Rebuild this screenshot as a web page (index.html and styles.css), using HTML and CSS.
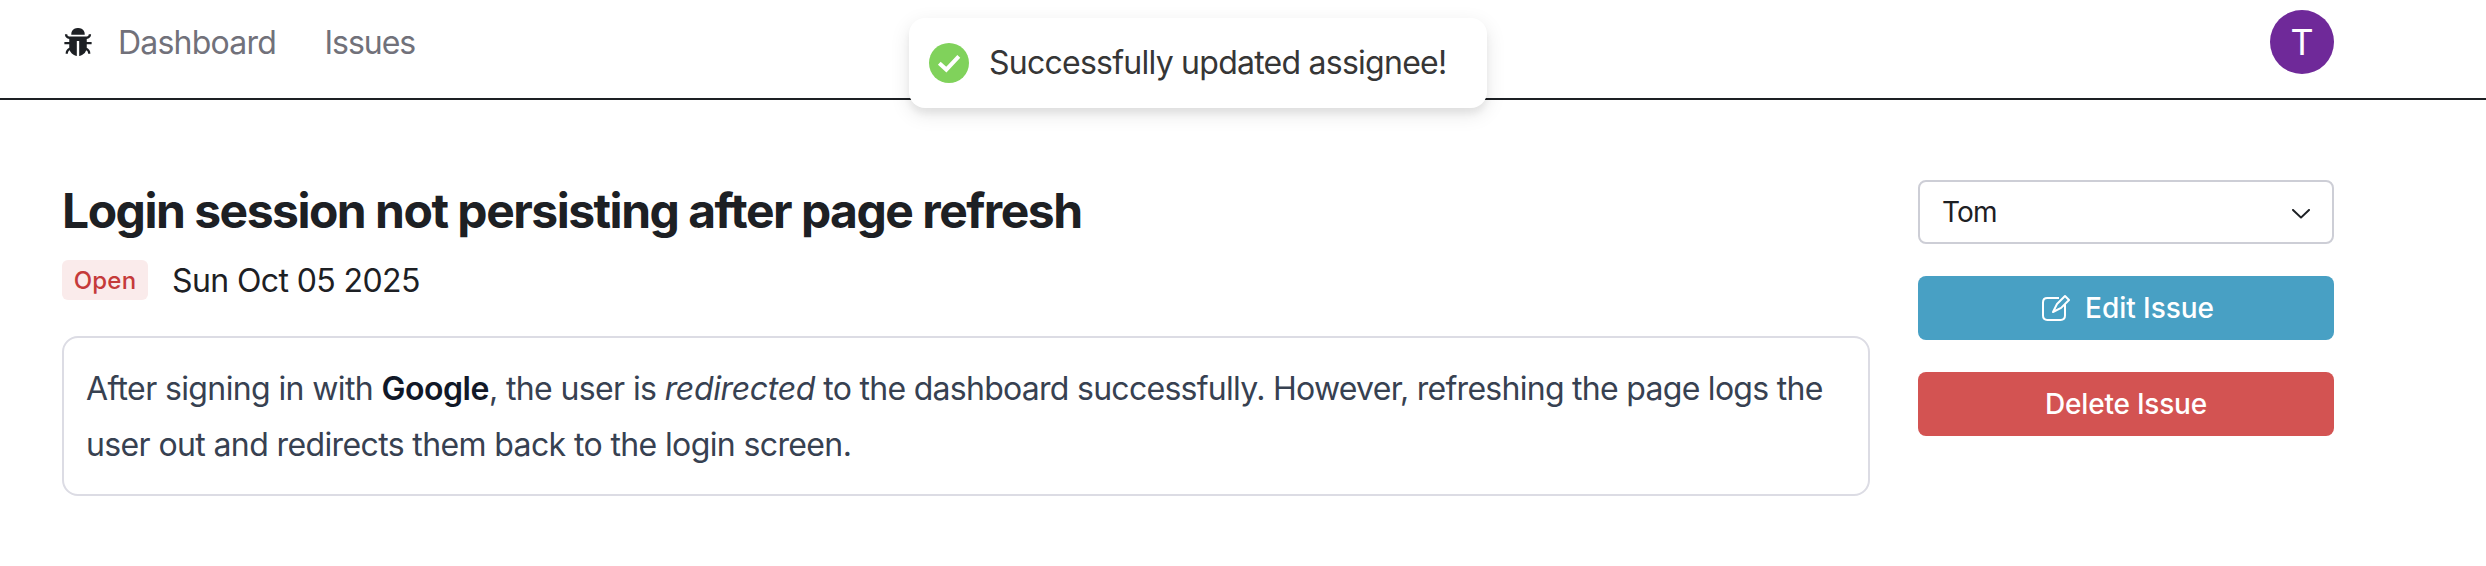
FILE: index.html
```
<!DOCTYPE html>
<html lang="en">
<head>
<meta charset="utf-8">
<title>Issue Tracker</title>
<link rel="stylesheet" href="styles.css">
</head>
<body>
<header class="navbar">
  <nav class="nav">
    <svg class="logo" viewBox="0 0 1024 1024" fill="currentColor"><path d="M304 280h416c4.4 0 8-3.6 8-8 0-40-8.800-76.700-25.900-108.100a184.310 184.310 0 0 0-74-74C596.700 72.800 560 64 520 64h-16c-40 0-76.700 8.800-108.100 25.900a184.310 184.310 0 0 0-74 74C304.800 195.300 296 232 296 272c0 4.400 3.600 8 8 8z"/><path d="M940 512H792V412c76.800 0 139-62.200 139-139 0-4.400-3.600-8-8-8h-60c-4.400 0-8 3.600-8 8a63 63 0 0 1-63 63H232a63 63 0 0 1-63-63c0-4.400-3.600-8-8-8h-60c-4.400 0-8 3.600-8 8 0 76.800 62.200 139 139 139v100H84c-4.400 0-8 3.600-8 8v56c0 4.400 3.600 8 8 8h148v96c0 6.500.2 13 .7 19.300C164.100 728.600 116 796.700 116 876c0 4.400 3.600 8 8 8h56c4.400 0 8-3.600 8-8 0-44.200 23.900-82.900 59.600-103.700a273 273 0 0 0 22.700 49c24.300 41.500 59 76.200 100.500 100.500 28.900 16.900 61 28.800 95.300 34.500 4.400 0 8-3.600 8-8V484c0-4.400 3.600-8 8-8h60c4.400 0 8 3.600 8 8v464.200c0 4.400 3.600 8 8 8 34.300-5.700 66.400-17.600 95.300-34.500a281.380 281.380 0 0 0 123.200-149.500A120.400 120.400 0 0 1 836 876c0 4.400 3.600 8 8 8h56c4.400 0 8-3.600 8-8 0-79.300-48.100-147.400-116.700-176.700.4-6.400.7-12.800.7-19.300v-96h148c4.400 0 8-3.600 8-8v-56c0-4.400-3.600-8-8-8z"/></svg>
    <a class="nav-link">Dashboard</a>
    <a class="nav-link nav-issues">Issues</a>
  </nav>
  <div class="avatar">T</div>
</header>
<main class="page">
  <section class="issue">
    <h1 class="title">Login session not persisting after page refresh</h1>
    <div class="meta">
      <span class="badge">Open</span>
      <span class="date">Sun Oct 05 2025</span>
    </div>
    <div class="card">
      <p class="prose">After signing in with <strong>Google</strong>, the user is <em>redirected</em><span class="rest"> to the dashboard successfully. However, refreshing the page logs the</span> user out and redirects them back to the login screen.</p>
    </div>
  </section>
  <aside class="actions">
    <div class="select"><span>Tom</span>
      <svg class="chevron" viewBox="0 0 9 9" fill="currentColor"><path d="M0.135 3.158C0.324 2.957 0.641 2.946 0.842 3.135L4.5 6.565L8.158 3.135C8.360 2.946 8.676 2.957 8.865 3.158C9.054 3.359 9.043 3.676 8.842 3.865L4.842 7.615C4.650 7.795 4.350 7.795 4.158 7.615L0.158 3.865C-0.044 3.676 -0.054 3.359 0.135 3.158Z"/></svg>
    </div>
    <button class="button edit">
      <svg class="pencil" viewBox="0 0 15 15" fill="none" stroke="currentColor" stroke-linejoin="round"><path d="M9.500 2.500H3.700Q1.500 2.500 1.500 4.700V11.300Q1.500 13.500 3.700 13.500H10.300Q12.500 13.500 12.500 11.300V5.500"/><path d="M12.500 1.500L14.500 3.500L10.550 7.450L6.500 9.500L8.500 5.500Z"/></svg>
      <span>Edit Issue</span>
    </button>
    <button class="button delete"><span>Delete Issue</span></button>
  </aside>
</main>
<div class="toast">
  <svg class="check" viewBox="0 0 40 40"><circle cx="20" cy="20" r="20" fill="#80d25b"/><path d="M10.300 20.300L17.300 26.600L29.800 13.400" fill="none" stroke="#fff" stroke-width="4"/></svg>
  <span>Successfully updated assignee!</span>
</div>
</body>
</html>
```
FILE: styles.css
```
* { box-sizing: border-box; }
body {
  margin: 0;
  background: #fff;
  color: #1d2024;
  font: 400 32px/48px Inter, "Liberation Sans", sans-serif;
}
.navbar {
  display: flex;
  justify-content: space-between;
  align-items: center;
  height: 100px;
  padding: 0 152px 14px 62px;
  border-bottom: 2px solid #1d2024;
}
.nav { display: flex; align-items: center; }
.logo { width: 32px; height: 32px; margin-right: 24px; }
.nav-link { padding-top: 2px; color: #71717a; letter-spacing: -0.78px; }
.nav-issues { margin-left: 48.5px; letter-spacing: -1.05px; }
.avatar {
  width: 64px;
  height: 64px;
  border-radius: 50%;
  background: #6f2999;
  color: #fff;
  font: 400 36px/66px Roboto, "Liberation Sans", sans-serif;
  text-align: center;
}
.page {
  display: grid;
  grid-template-columns: 1808px 416px;
  gap: 48px;
  padding: 80px 0 0 62px;
}
.title {
  margin: 0;
  padding-top: 1px;
  font-size: 48px;
  line-height: 60px;
  font-weight: 700;
  letter-spacing: -1.5px;
}
.meta { display: flex; align-items: center; gap: 24px; height: 48px; margin: 15px 0 32px; }
.badge {
  height: 40px;
  width: 86px;
  padding-top: 1px;
  border-radius: 6px;
  background: #faebeb;
  color: #c53a3a;
  font-size: 24px;
  line-height: 40px;
  font-weight: 500;
  letter-spacing: 0.22px;
  text-align: center;
}
.date { padding-top: 2px; letter-spacing: -0.6px; }
.card {
  height: 160px;
  padding: 23px 22px 21px;
  border: 2px solid #dcdce4;
  border-radius: 16px;
}
.prose {
  margin: 0;
  color: #374151;
  line-height: 56px;
  letter-spacing: -0.62px;
}
.prose strong { color: #111827; font-weight: 600; letter-spacing: -0.47px; }
.prose em { letter-spacing: -0.35px; }
.rest { letter-spacing: -0.72px; }
.actions { display: flex; flex-direction: column; gap: 32px; font-size: 28px; }
.select {
  display: flex;
  align-items: center;
  justify-content: space-between;
  height: 64px;
  padding: 0 22px;
  border: 2px solid #cdced6;
  border-radius: 8px;
  letter-spacing: -0.8px;
}
.chevron { width: 18px; height: 18px; }
.button {
  display: flex;
  align-items: center;
  justify-content: center;
  gap: 15px;
  height: 64px;
  border: 0;
  border-radius: 8px;
  color: #fff;
  font: 500 28px/40px Inter, "Liberation Sans", sans-serif;
}
.edit { padding-left: 8px; background: #48a0c4; letter-spacing: -0.04px; }
.delete { background: #d35352; letter-spacing: -0.22px; }
.pencil { width: 30px; height: 30px; }
.toast {
  position: absolute;
  top: 18px;
  left: 909px;
  display: flex;
  align-items: center;
  gap: 20px;
  width: 578px;
  height: 90px;
  padding-left: 20px;
  border-radius: 16px;
  background: #fff;
  color: #363636;
  letter-spacing: -0.75px;
  box-shadow: 0 6px 20px rgba(0, 0, 0, 0.1), 0 6px 6px rgba(0, 0, 0, 0.05);
}
.check { width: 40px; height: 40px; }
```
